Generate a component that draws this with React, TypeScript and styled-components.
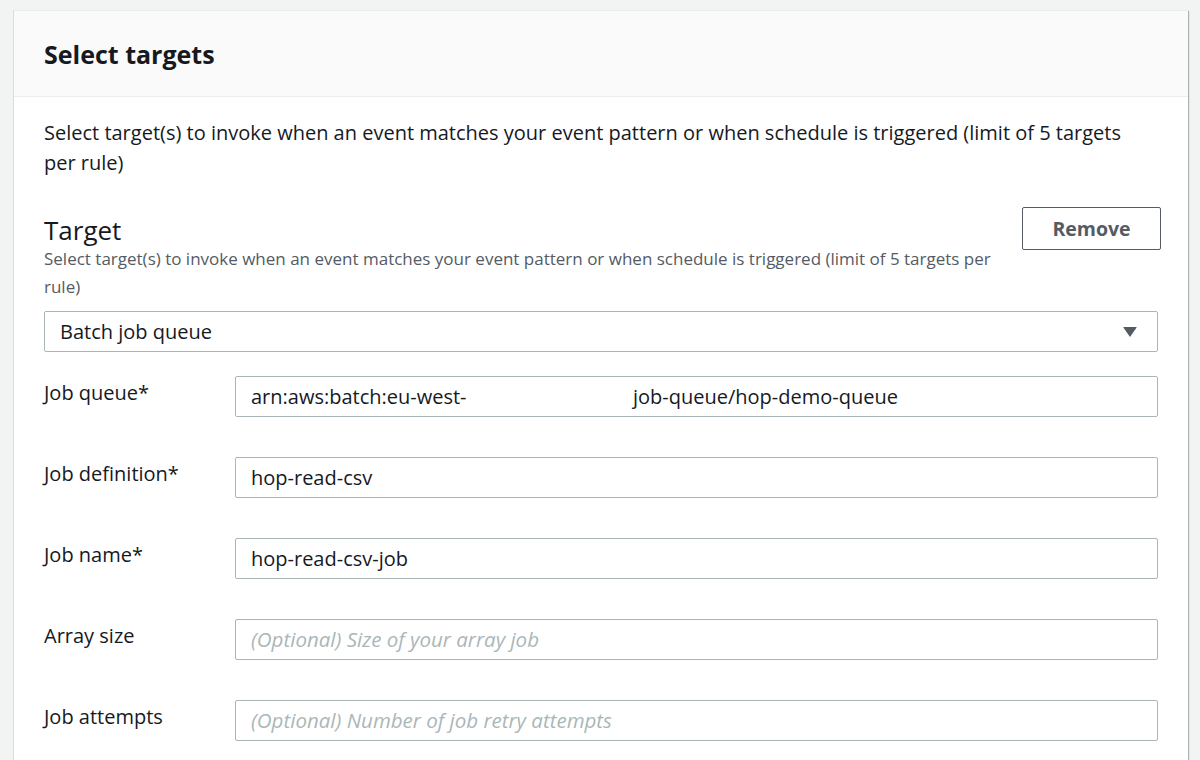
import React from "react";
import styled, { createGlobalStyle } from "styled-components";

const GlobalStyle = createGlobalStyle`
  html, body {
    margin: 0;
    padding: 0;
    background: #f2f3f3;
    font-family: "Open Sans", "Noto Sans", sans-serif;
    color: #16191f;
  }
`;

const Page = styled.div`
  padding: 10px 12px 0 14px;
  height: 760px;
  box-sizing: border-box;
  overflow: hidden;
`;

const Card = styled.div`
  background: #ffffff;
  box-shadow: 1px 1px 1px 0 rgba(0, 28, 36, 0.3), -1px 0 0 0 rgba(0, 28, 36, 0.1);
  border-top: 1px solid #eaeded;
`;

const CardHeader = styled.div`
  height: 85px;
  display: flex;
  align-items: center;
  padding: 0 30px;
  background: #fafafa;
  border-bottom: 1px solid #eaeded;
`;

const Title = styled.h2`
  margin: 0;
  font-size: 25px;
  font-weight: 700;
  color: #16191f;
`;

const CardBody = styled.div`
  padding: 21px 30px 30px;
`;

const Intro = styled.p`
  margin: 0;
  font-size: 20px;
  line-height: 30px;
  max-width: 1085px;
`;

const TargetHead = styled.div`
  display: flex;
  justify-content: space-between;
  align-items: flex-start;
  margin-top: 29px;
`;

const TargetText = styled.div`
  flex: 1;
  padding-top: 8px;
`;

const TargetTitle = styled.h3`
  margin: 0;
  font-size: 26px;
  font-weight: 400;
  line-height: 30px;
`;

const Description = styled.p`
  margin: 0;
  font-size: 17px;
  line-height: 28px;
  color: #545b64;
  max-width: 965px;
`;

const Button = styled.button`
  width: 139px;
  height: 43px;
  margin-right: -3px;
  background: #ffffff;
  border: 1px solid #545b64;
  border-radius: 2px;
  font-family: inherit;
  font-size: 19.5px;
  font-weight: 700;
  color: #545b64;
  cursor: pointer;
`;

const Select = styled.div`
  margin-top: 10px;
  height: 41px;
  box-sizing: border-box;
  border: 1px solid #aab7b8;
  border-radius: 2px;
  display: flex;
  align-items: center;
  justify-content: space-between;
  padding: 0 20px 0 15px;
  font-size: 20px;
`;

const Caret = styled.span`
  width: 0;
  height: 0;
  border-left: 7px solid transparent;
  border-right: 7px solid transparent;
  border-top: 10px solid #545b64;
  border-radius: 1px;
`;

const Fields = styled.div`
  display: flex;
  flex-direction: column;
  gap: 40px;
  margin-top: 24px;
`;

const Row = styled.div`
  display: grid;
  grid-template-columns: 191px 1fr;
  align-items: start;
`;

const Label = styled.label`
  font-size: 20px;
  line-height: 24px;
  padding-top: 5px;
`;

const Input = styled.input`
  height: 41px;
  box-sizing: border-box;
  border: 1px solid #aab7b8;
  border-radius: 2px;
  padding: 0 15px;
  font-family: inherit;
  font-size: 20px;
  color: #16191f;
  outline: none;
  &::placeholder {
    color: #aab7b8;
    font-style: italic;
    font-size: 20.5px;
  }
`;

const FakeInput = styled.div`
  height: 41px;
  box-sizing: border-box;
  border: 1px solid #aab7b8;
  border-radius: 2px;
  padding: 0 15px;
  display: flex;
  align-items: center;
  font-size: 20px;
  white-space: nowrap;
`;

// the account id part of the ARN is blanked out in the screenshot
const ArnPrefix = styled.span<{ $width: number }>`
  display: inline-block;
  width: ${(p) => p.$width}px;
  overflow: hidden;
`;

const fields = [
  { label: "Job definition*", value: "hop-read-csv" },
  { label: "Job name*", value: "hop-read-csv-job" },
  { label: "Array size", placeholder: "(Optional) Size of your array job" },
  { label: "Job attempts", placeholder: "(Optional) Number of job retry attempts" }
];

const App: React.FC = () => {
  const desc =
    "Select target(s) to invoke when an event matches your event pattern or when schedule is triggered (limit of 5 targets per rule)";

  return (
    <Page>
      <GlobalStyle />
      <Card>
        <CardHeader>
          <Title>Select targets</Title>
        </CardHeader>
        <CardBody>
          <Intro>{desc}</Intro>
          <TargetHead>
            <TargetText>
              <TargetTitle>Target</TargetTitle>
              <Description>{desc}</Description>
            </TargetText>
            <Button>Remove</Button>
          </TargetHead>
          <Select>
            <span>Batch job queue</span>
            <Caret />
          </Select>
          <Fields>
            <Row>
              <Label>Job queue*</Label>
              <FakeInput>
                <ArnPrefix $width={382}>arn:aws:batch:eu-west-</ArnPrefix>
                <span>job-queue/hop-demo-queue</span>
              </FakeInput>
            </Row>
            {fields.map((f) => (
              <Row key={f.label}>
                <Label>{f.label}</Label>
                <Input
                  readOnly
                  defaultValue={f.value}
                  placeholder={f.placeholder}
                />
              </Row>
            ))}
          </Fields>
        </CardBody>
      </Card>
    </Page>
  );
};

export default App;
